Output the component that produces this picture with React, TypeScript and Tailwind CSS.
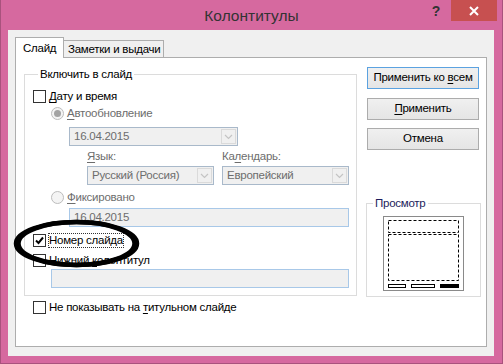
import React from "react";

const font = "font-['Liberation_Sans',Arial,sans-serif]";

function U({ children }: { children: React.ReactNode }) {
  return <span className="underline underline-offset-2">{children}</span>;
}

function Checkbox({ checked, children, focus }: { checked?: boolean; children: React.ReactNode; focus?: boolean }) {
  return (
    <div className="flex h-[13px] items-center">
      <div className="flex h-[13px] w-[13px] items-center justify-center border border-[#333333] bg-white">
        {checked ? (
          <svg width="9" height="9" viewBox="0 0 9 9">
            <path d="M1 4.5 L3.5 7 L8 1.5" fill="none" stroke="#000" strokeWidth="2" />
          </svg>
        ) : null}
      </div>
      <span
        className={
          "ml-[3px] whitespace-nowrap leading-[13px] text-black " +
          (focus ? "outline outline-1 outline-dotted outline-[#333] outline-offset-0" : "")
        }
      >
        {children}
      </span>
    </div>
  );
}

function Radio({ checked, children }: { checked?: boolean; children: React.ReactNode }) {
  return (
    <div className="ml-[18px] flex h-[13px] items-center">
      <div className="flex h-[13px] w-[13px] items-center justify-center rounded-full border border-[#bcbcbc] bg-[#f4f4f4]">
        {checked ? <div className="h-[7px] w-[7px] rounded-full bg-[#a3a3a3]" /> : null}
      </div>
      <span className="ml-[3px] leading-[13px] text-[#6d6d6d]">{children}</span>
    </div>
  );
}

function Chevron() {
  return (
    <svg width="9" height="6" viewBox="0 0 9 6">
      <path d="M1 1 L4.5 4.5 L8 1" fill="none" stroke="#c4c4c4" strokeWidth="1.2" />
    </svg>
  );
}

function Combo({ value, width }: { value: string; width: string }) {
  return (
    <div className={"flex h-[19px] border border-[#a9b9ca] bg-[#f0f0f0] " + width}>
      <span className="flex-1 whitespace-nowrap pl-[4px] leading-[17px] text-[#6d6d6d]">{value}</span>
      <div className="m-px flex w-[15px] items-center justify-center border border-[#dadada] bg-[#f0f0f0]">
        <Chevron />
      </div>
    </div>
  );
}

function Field({ value, width }: { value?: string; width: string }) {
  return (
    <div className={"h-[19px] border border-[#a8c8e8] bg-[#f0f0f0] pl-[4px] leading-[17px] text-[#6d6d6d] " + width}>
      {value}
    </div>
  );
}

function Button({ children, primary }: { children: React.ReactNode; primary?: boolean }) {
  return (
    <div
      className={
        "flex h-[22px] w-[112px] items-center justify-center bg-gradient-to-b from-[#f0f0f0] to-[#e5e5e5] text-black " +
        (primary ? "border border-[#5ba2e0]" : "border border-[#acacac]")
      }
    >
      <span className="whitespace-nowrap">{children}</span>
    </div>
  );
}

export default function App() {
  return (
    <div
      className={
        "relative flex h-[364px] w-[503px] flex-col border-x border-b border-[#a9527d] bg-[#d6699f] text-[11.5px] tracking-[-0.25px] " +
        font
      }
    >
      <div className="grid h-[30px] grid-cols-[1fr_auto_1fr]">
        <div />
        <div className="pt-[6px] text-[15.5px] leading-[20px] tracking-normal text-[#333333]">Колонтитулы</div>
        <div className="flex items-start justify-end pr-[5px]">
          <span className="mr-[11px] mt-[3px] text-[14px] font-bold leading-[16px] text-[#333333]">?</span>
          <div className="flex h-[21px] w-[46px] items-center justify-center bg-[#c75050]">
            <svg width="10" height="10" viewBox="0 0 10 10">
              <path d="M1 1 L9 9 M9 1 L1 9" stroke="#fff" strokeWidth="2" />
            </svg>
          </div>
        </div>
      </div>

      <div className="ml-[7px] mr-[8px] mb-[7px] flex flex-1 flex-col bg-[#f0f0f0] px-[7px] pt-[7px] pb-[9px]">
        <div className="flex h-[20px] items-end">
          <div className="relative z-10 -mb-px h-[21px] w-[49px] border-x border-t border-[#adadad] bg-white pl-[7px] pt-[3px] leading-[14px] text-black">
            Слайд
          </div>
          <div className="h-[17px] w-[100px] whitespace-nowrap border-r border-t border-[#adadad] bg-[#f0f0f0] pl-[4px] pt-[1px] leading-[14px] text-black">
            Заметки и выдачи
          </div>
        </div>

        <div className="flex flex-1 border border-[#adadad] bg-white pl-[8px] pt-[9px]">
          <div className="flex flex-col">
            <fieldset className="w-[333px] border border-[#dcdcdc] pl-[8px] pb-[7px]">
              <legend className="ml-[5px] px-[2px] leading-[14px] text-black">Включить в слайд</legend>
              <div className="mt-[9px]">
                <Checkbox>
                  <U>Д</U>ату и время
                </Checkbox>
              </div>
              <div className="mt-[4px]">
                <Radio checked>
                  <U>А</U>втообновление
                </Radio>
              </div>
              <div className="ml-[36px] mt-[7px]">
                <Combo value="16.04.2015" width="w-[169px]" />
              </div>
              <div className="ml-[54px] mt-[3px] flex h-[14px] leading-[14px] text-[#6d6d6d]">
                <span className="w-[135px]">
                  <U>Я</U>зык:
                </span>
                <span>
                  Ка<U>л</U>ендарь:
                </span>
              </div>
              <div className="ml-[54px] mt-[3px] flex gap-[8px]">
                <Combo value="Русский (Россия)" width="w-[127px]" />
                <Combo value="Европейский" width="w-[127px]" />
              </div>
              <div className="mt-[6px]">
                <Radio>
                  <U>Ф</U>иксировано
                </Radio>
              </div>
              <div className="ml-[36px] mt-[4px]">
                <Field value="16.04.2015" width="w-[280px]" />
              </div>
              <div className="mt-[7px]">
                <Checkbox checked focus>
                  Номер слайда
                </Checkbox>
              </div>
              <div className="mt-[7px]">
                <Checkbox>
                  Нижний <U>к</U>олонтитул
                </Checkbox>
              </div>
              <div className="ml-[18px] mt-[2px]">
                <Field width="w-[298px]" />
              </div>
            </fieldset>
            <div className="ml-[9px] mt-[5px]">
              <Checkbox>
                Не показывать на <U>т</U>итульном слайде
              </Checkbox>
            </div>
          </div>

          <div className="ml-[9px] flex flex-col">
            <div className="ml-px">
              <Button primary>
                Применить ко <U>в</U>сем
              </Button>
            </div>
            <div className="ml-px mt-[9px]">
              <Button>
                <U>П</U>рименить
              </Button>
            </div>
            <div className="ml-px mt-[8px]">
              <Button>Отмена</Button>
            </div>
            <fieldset className="mt-[46px] w-[115px] border border-[#dcdcdc] pb-[5px]">
              <legend className="ml-[6px] px-[2px] leading-[14px] text-[#1c1c5c]">Просмотр</legend>
              <div className="mt-[6px] flex justify-center">
                <svg width="81" height="75" viewBox="0 0 81 75">
                  <rect x="0.5" y="0.5" width="80" height="74" fill="#fff" stroke="#8a8a8a" />
                  <rect x="5.5" y="4.5" width="70" height="12" fill="none" stroke="#000" strokeDasharray="3 2" />
                  <rect x="5.5" y="18.5" width="70" height="46" fill="none" stroke="#000" strokeDasharray="3 2" />
                  <rect x="5.5" y="68.5" width="17" height="3" fill="none" stroke="#000" />
                  <rect x="28.5" y="68.5" width="23" height="3" fill="none" stroke="#000" />
                  <rect x="57" y="68" width="19" height="4" fill="#000" />
                </svg>
              </div>
            </fieldset>
          </div>
        </div>
      </div>

      <svg className="absolute left-0 top-0" width="503" height="364" viewBox="0 0 503 364" pointerEvents="none">
        <ellipse cx="75.5" cy="243.5" rx="60.5" ry="21.5" fill="none" stroke="#000" strokeWidth="4.5" />
        <ellipse cx="75.5" cy="243.5" rx="58" ry="21.5" fill="none" stroke="#000" strokeWidth="4.5" />
      </svg>
    </div>
  );
}
